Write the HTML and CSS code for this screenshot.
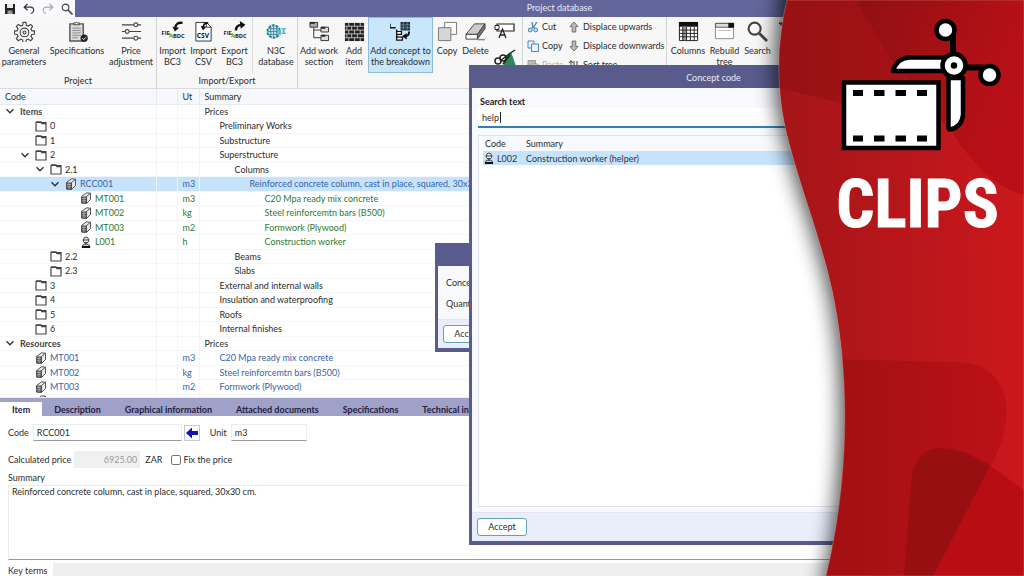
FILE: index.html
```html
<!DOCTYPE html>
<html lang="en">
<head>
<meta charset="utf-8">
<title>Project database</title>
<link rel="stylesheet" href="styles.css">
</head>
<body>
<svg class="defs" aria-hidden="true">
  <symbol id="folder" viewBox="0 0 12 12"><path d="M1 2.500h10v8.500H1z" fill="#fff" stroke="#444" stroke-width="1.200"/><path d="M1 2h5l1 1.500h4" fill="none" stroke="#444" stroke-width="1.400"/></symbol>
  <symbol id="block" viewBox="0 0 12 12"><path d="M1.500 4.500 6.500.8l4 .4v6.300L6.500 11.500l-5-.5z" fill="#e8e8e8" stroke="#444" stroke-width=".9"/><path d="M1.500 4.500h5v7h-5z" fill="#555"/><path d="m6.500 4.500 4-3.300M6.500 4.500v7" stroke="#444" stroke-width=".9"/><path d="M2 6.500h4M2 8.800h4M4 5v6" stroke="#ccc" stroke-width=".6"/></symbol>
  <symbol id="worker" viewBox="0 0 12 12"><path d="M3.500 4a2.500 3 0 0 1 5 0v1.500q-2.500 4-5 0z" fill="#eee" stroke="#444"/><path d="M2.500 4h7M4 6.500h4" stroke="#444"/><path d="M2 11.500q0-3 2.500-3.200h3Q10 8.500 10 11.500z" fill="#ccc" stroke="#444"/><path d="M2 10h8v2H2z" fill="#111"/></symbol>
  <symbol id="chev" viewBox="0 0 10 10"><path d="m1.500 3.300 3.500 3.500 3.500-3.500" fill="none" stroke="#333" stroke-width="1.400"/></symbol>
  <symbol id="pages" viewBox="0 0 22 22"><path d="M8 1.500h12.500v12.500H8z" fill="#fafafa" stroke="#777"/><path d="M1.500 7h13v13.500h-13z" fill="#d6d6d6" stroke="#777"/></symbol>
  <symbol id="arrow" viewBox="0 0 12 12"><path d="M6 1 10 5.500H7.800V11H4.200V5.500H2z" fill="#bbb" stroke="#666" stroke-width=".9"/></symbol>
</svg>

<header class="titlebar">
  <nav class="quick" aria-label="Quick access">
    <button aria-label="Save"><svg viewBox="0 0 12 12"><path d="M1 1h10v10H1z" fill="#222"/><path d="M3 1h6v4H3z" fill="#e8e8e8"/><path d="M3.500 7.500h5V11h-5z" fill="#999"/></svg></button>
    <button aria-label="Undo"><svg viewBox="0 0 12 12"><path d="M4.500 1 1.200 4.200l3.300 3M1.500 4.200h6q3.500.3 3.200 3.300-.4 2.500-3 3" fill="none" stroke="#333" stroke-width="1.200"/></svg></button>
    <button aria-label="Redo"><svg viewBox="0 0 12 12"><path d="m7.500 1 3.300 3.200-3.300 3M10.500 4.200h-6Q1 4.500 1.300 7.500q.4 2.500 3 3" fill="none" stroke="#aaa" stroke-width="1.200"/></svg></button>
    <button aria-label="Find"><svg viewBox="0 0 12 12"><circle cx="4.500" cy="4.500" r="3.300" fill="none" stroke="#444" stroke-width="1.200"/><path d="m7 7 4.500 4.500" stroke="#444" stroke-width="1.600"/></svg></button>
  </nav>
  <h1>Project database</h1>
</header>

<div class="ribbon">
  <section class="group">
    <div class="tools">
      <button class="tool w48"><svg viewBox="0 0 22 22"><g fill="none" stroke="#444" stroke-width="1.200"><path d="M9.500 1.500h3l.5 3 1.800.8 2.600-1.700 2.100 2.100-1.700 2.500.8 1.900 2.900.5v3l-2.900.5-.8 1.800 1.700 2.600-2.100 2.100-2.600-1.700-1.800.8-.5 2.900h-3l-.5-2.900-1.900-.8-2.500 1.700-2.100-2.100 1.700-2.600-.8-1.800-3-.5v-3l3-.5.8-1.900-1.700-2.500 2.100-2.100 2.500 1.700L9 4.500z"/><circle cx="11" cy="12" r="4.500"/><circle cx="11" cy="12" r="1.500"/></g></svg>General parameters</button>
      <button class="tool w58"><svg viewBox="0 0 22 22"><path d="M3 3h14v18H3z" fill="#ddd" stroke="#555" stroke-width="1.500"/><path d="M7 4V2h2q1-2 2 0h2v2z" fill="#eee" stroke="#444"/><path d="M5.500 7.500h9M5.500 10h9M5.500 12.500h9M5.500 15h9M5.500 17.500h6" stroke="#888"/><circle cx="18" cy="18" r="3.800" fill="#222"/><path d="m16 18 1.500 1.500L20 17" fill="none" stroke="#fff"/></svg>Specifications</button>
      <button class="tool w50"><svg viewBox="0 0 22 22"><g fill="#fff" stroke="#444" stroke-width="1.200"><path d="M1 4h20M1 11h20M1 18h20"/><circle cx="15.500" cy="4" r="2"/><circle cx="6.500" cy="11" r="2"/><circle cx="15.500" cy="18" r="2"/></g></svg>Price adjustment</button>
    </div>
    <h2>Project</h2>
  </section>
  <section class="group">
    <div class="tools">
      <button class="tool w31"><svg class="wide" viewBox="0 0 24 22"><path d="M22 2q-7-1-7.500 5" fill="none" stroke="#111" stroke-width="2.500"/><path d="m11.500 6 7 1-4.500 4z" fill="#111"/><text class="tiny" x="0" y="15">FIE</text><text class="tiny" x="12" y="18">BDC</text><path d="m8 13 4 4" stroke="#65b82f" stroke-width="2"/><path d="m8 17 3-3" stroke="#e8a13a" stroke-width="1.500"/></svg>Import BC3</button>
      <button class="tool w31"><svg viewBox="0 0 22 22"><path d="M3 1.500h11l5 5V21H3z" fill="#fff" stroke="#333"/><path d="M14 1.500v5h5" fill="none" stroke="#333"/><path d="M16 2q-5 0-5 4" fill="none" stroke="#111" stroke-width="2"/><path d="m8 5 6 1-3.500 4z" fill="#111"/><text class="csv" x="4" y="18">CSV</text></svg>Import CSV</button>
      <button class="tool w31"><svg class="wide" viewBox="0 0 24 22"><path d="M13 10q0-6 6-6" fill="none" stroke="#111" stroke-width="2.500"/><path d="m17 0 6 4-5 4z" fill="#111"/><text class="tiny" x="0" y="15">FIE</text><text class="tiny" x="12" y="18">BDC</text><path d="m8 13 4 4" stroke="#65b82f" stroke-width="2"/><path d="m8 17 3-3" stroke="#e8a13a" stroke-width="1.500"/></svg>Export BC3</button>
      <span class="rule"></span>
      <button class="tool w42"><svg viewBox="0 0 22 22"><circle cx="8" cy="11" r="6.500" fill="#cfe9ee" stroke="#238296" stroke-width="2" stroke-dasharray="3 1"/><path d="M3 8h10M2 11h11M3 14h10M8 5v12M5 6v10M11 6v10" stroke="#2d8798" stroke-width=".9"/><path d="M12 13V8l3 5V8M16 8h2v5h-2M21 8h-2v5h2" fill="none" stroke="#62bcd0" stroke-width="1.300"/></svg>N3C database</button>
    </div>
    <h2>Import/Export</h2>
  </section>
  <section class="group">
    <div class="tools">
      <button class="tool w42"><svg viewBox="0 0 22 22"><path d="M5 6v11.500h8M5 9.500h8" fill="none" stroke="#333"/><g fill="#aaa" stroke="#333"><path d="M1 1.500h8v5H1z"/><path d="M12.500 6.500h8v5h-8zM12.500 15h8v5.500h-8z" fill="#ddd"/></g><path d="M1 2h5M13 7h4M13 15.500h4" stroke="#222" stroke-width="2"/></svg>Add work section</button>
      <button class="tool w28"><svg viewBox="0 0 22 22"><path d="M1 2h20v19H1z" fill="#222"/><path d="M1 5.500h20M1 9.500h20M1 13.500h20M1 17.500h20M5 2v3.500M11 2v3.500M17 2v3.500M8 5.500v4M14 5.500v4M3 5.500v4M5 9.500v4M11 9.500v4M17 9.500v4M8 13.500v4M14 13.500v4M3 13.500v4M5 17.500V21M11 17.500V21M17 17.500V21" stroke="#ddd" stroke-width=".8"/></svg>Add item</button>
      <button class="tool w65 active"><svg viewBox="0 0 22 22"><path d="M11 1h10v9H11z" fill="#26343d"/><path d="M11 4h10M11 7h10M14 1v9M18 1v9" stroke="#7e99a8" stroke-width=".7"/><path d="M0 3v4h6M7 9v10M7 13h5M7 19h5" fill="none" stroke="#111" stroke-width="1.500"/><path d="M7 11h5v3H7zM7 17h6v3H7z" fill="#fff" stroke="#111" stroke-width="1.300"/><path d="M20 11q0 5-4 5" fill="none" stroke="#111" stroke-width="2"/><path d="m12.500 16 5-3.500v7z" fill="#111"/></svg>Add concept to the breakdown</button>
      <button class="tool w28"><svg viewBox="0 0 22 22"><use href="#pages"/></svg>Copy</button>
      <button class="tool w29"><svg viewBox="0 0 22 22"><path d="M1 14 10 3h11l-8 11z" fill="#ccc" stroke="#444"/><path d="M1 14h12v5H1z" fill="#fff" stroke="#444"/><path d="m13 14 8-11v5l-8 11z" fill="#777" stroke="#444"/><path d="M13 19.500h8" stroke="#888" stroke-width="1.500"/></svg>Delete</button>
      <div class="stack">
        <button aria-label="Rename"><svg viewBox="0 0 22 20"><path d="M3 2h17v7H3z" fill="#fff" stroke="#222" stroke-width="1.200"/><path d="M1 3.500h4v4H1z" fill="#fff" stroke="#222"/><path d="m5 16 3.500-9 3.500 9M6.500 13h4" fill="none" stroke="#222" stroke-width="1.300"/></svg></button>
        <button aria-label="Paint"><svg viewBox="0 0 22 20"><path d="M11 10 17 4l5 14H9z" fill="#2a8a5c"/><circle cx="4" cy="13" r="3" fill="#fff" stroke="#222" stroke-width="1.500"/><circle cx="9" cy="10" r="3" fill="#fff" stroke="#222" stroke-width="1.500"/><path d="m6 13 9-7 6-4M9 16l7-9" fill="none" stroke="#222" stroke-width="1.500"/></svg></button>
      </div>
    </div>
  </section>
  <section class="group">
    <div class="tools">
      <div class="lines cutcol">
        <button><svg viewBox="0 0 12 12"><path d="M5 1q0 4 2.500 6.500M9.500 1Q9 4 4.500 7.500" fill="none" stroke="#3a7fb8" stroke-width="1.300"/><circle cx="3.200" cy="9" r="1.900" fill="#cfe6f7" stroke="#3a7fb8"/><circle cx="8.700" cy="9" r="1.900" fill="#cfe6f7" stroke="#3a7fb8"/></svg>Cut</button>
        <button><svg viewBox="0 0 12 12"><path d="M1 1h6v7H1z" fill="#e8f3fc" stroke="#4a86bb"/><path d="M4.500 4h7v7.500h-7z" fill="#e8f3fc" stroke="#4a86bb"/></svg>Copy</button>
        <button disabled><svg viewBox="0 0 12 12"><path d="M1 1.500h7.500V9H1z" fill="#bbb" stroke="#999"/><path d="M5 5h6v6H5z" fill="#eee" stroke="#999"/></svg>Paste</button>
      </div>
      <div class="lines movecol">
        <button><svg viewBox="0 0 12 12"><use href="#arrow"/></svg>Displace upwards</button>
        <button><svg viewBox="0 0 12 12"><use href="#arrow" transform="rotate(180 6 6)"/></svg>Displace downwards</button>
        <button><svg viewBox="0 0 12 12"><path d="M3 11V2M1 4l2-2.500L5 4M9 2v9M7 8.500 9 11l2-2.500M6 2v7" fill="none" stroke="#444"/></svg>Sort tree</button>
      </div>
    </div>
  </section>
  <section class="group">
    <div class="tools">
      <button class="tool w42"><svg viewBox="0 0 22 22"><path d="M1.500 2h19v18.500h-19z" fill="#fff" stroke="#222"/><path d="M1 1h20v5H1z" fill="#111"/><path d="M5 6h4v14H5z" fill="#999"/><path d="M1 9.500h20M1 13h20M1 16.500h20M5 6v15M9 6v15M13 6v15M17 6v15" stroke="#222"/></svg>Columns</button>
      <button class="tool w31"><svg viewBox="0 0 22 22"><path d="M1.500 2.500h19v16h-19z" fill="#fff" stroke="#888"/><path d="M1.500 2.500h19v4h-19z" fill="#ddd" stroke="#555"/><path d="M15 2h6v5h-6z" fill="#111"/><path d="M4 10h14" stroke="#bbb"/></svg>Rebuild tree</button>
      <button class="tool w35"><svg viewBox="0 0 22 22"><circle cx="8" cy="8" r="6.300" fill="#f8f8f8" stroke="#444" stroke-width="2.200"/><path d="m13 13 8 8" stroke="#444" stroke-width="3"/></svg>Search</button>
      <button class="tool w28"><svg viewBox="0 0 22 22"><path d="M0 2h20l-7 8v9l-4-3v-6z" fill="#666" stroke="#333"/></svg>Filter</button>
    </div>
  </section>
</div>

<main class="tree">
  <table>
    <colgroup><col class="c-code"><col class="c-gap"><col class="c-ut"><col></colgroup>
    <thead><tr><th>Code</th><th></th><th>Ut</th><th>Summary</th></tr></thead>
    <tbody>
      <tr class="l0"><td><div><svg><use href="#chev"/></svg><b>Items</b></div></td><td></td><td></td><td>Prices</td></tr>
      <tr class="l1"><td><div><i></i><svg><use href="#folder"/></svg>0</div></td><td></td><td></td><td>Preliminary Works</td></tr>
      <tr class="l1"><td><div><i></i><svg><use href="#folder"/></svg>1</div></td><td></td><td></td><td>Substructure</td></tr>
      <tr class="l1"><td><div><svg><use href="#chev"/></svg><svg><use href="#folder"/></svg>2</div></td><td></td><td></td><td>Superstructure</td></tr>
      <tr class="l2"><td><div><svg><use href="#chev"/></svg><svg><use href="#folder"/></svg>2.1</div></td><td></td><td></td><td>Columns</td></tr>
      <tr class="l3 blue selected"><td><div><svg><use href="#chev"/></svg><svg><use href="#block"/></svg>RCC001</div></td><td></td><td>m3</td><td>Reinforced concrete column, cast in place, squared, 30x30 cm.</td></tr>
      <tr class="l4 green"><td><div><i></i><svg><use href="#block"/></svg>MT001</div></td><td></td><td>m3</td><td>C20 Mpa ready mix concrete</td></tr>
      <tr class="l4 green"><td><div><i></i><svg><use href="#block"/></svg>MT002</div></td><td></td><td>kg</td><td>Steel reinforcemtn bars (B500)</td></tr>
      <tr class="l4 green"><td><div><i></i><svg><use href="#block"/></svg>MT003</div></td><td></td><td>m2</td><td>Formwork (Plywood)</td></tr>
      <tr class="l4 green"><td><div><i></i><svg><use href="#worker"/></svg>L001</div></td><td></td><td>h</td><td>Construction worker</td></tr>
      <tr class="l2"><td><div><i></i><svg><use href="#folder"/></svg>2.2</div></td><td></td><td></td><td>Beams</td></tr>
      <tr class="l2"><td><div><i></i><svg><use href="#folder"/></svg>2.3</div></td><td></td><td></td><td>Slabs</td></tr>
      <tr class="l1"><td><div><i></i><svg><use href="#folder"/></svg>3</div></td><td></td><td></td><td>External and internal walls</td></tr>
      <tr class="l1"><td><div><i></i><svg><use href="#folder"/></svg>4</div></td><td></td><td></td><td>Insulation and waterproofing</td></tr>
      <tr class="l1"><td><div><i></i><svg><use href="#folder"/></svg>5</div></td><td></td><td></td><td>Roofs</td></tr>
      <tr class="l1"><td><div><i></i><svg><use href="#folder"/></svg>6</div></td><td></td><td></td><td>Internal finishes</td></tr>
      <tr class="l0"><td><div><svg><use href="#chev"/></svg><b>Resources</b></div></td><td></td><td></td><td>Prices</td></tr>
      <tr class="l1 blue"><td><div><i></i><svg><use href="#block"/></svg>MT001</div></td><td></td><td>m3</td><td>C20 Mpa ready mix concrete</td></tr>
      <tr class="l1 blue"><td><div><i></i><svg><use href="#block"/></svg>MT002</div></td><td></td><td>kg</td><td>Steel reinforcemtn bars (B500)</td></tr>
      <tr class="l1 blue"><td><div><i></i><svg><use href="#block"/></svg>MT003</div></td><td></td><td>m2</td><td>Formwork (Plywood)</td></tr>
      <tr class="l1 blue"><td><div><i></i><svg><use href="#block"/></svg></div></td><td></td><td></td><td></td></tr>
    </tbody>
  </table>
</main>

<section class="detail">
  <nav class="tabs">
    <a href="#item" class="current">Item</a><a href="#description">Description</a><a href="#graphical">Graphical information</a><a href="#attached">Attached documents</a><a href="#specs">Specifications</a><a href="#technical">Technical information</a>
  </nav>
  <form class="fields">
    <div class="line">
      <label for="code">Code</label><input id="code" class="f-code" value="RCC001">
      <button type="button" class="back" aria-label="Change code"><svg viewBox="0 0 12 12"><path d="M0 6 6 .5V4h6v4H6v3.500z" fill="#1414a8"/></svg></button>
      <label for="unit" class="unit">Unit</label><input id="unit" class="f-unit" value="m3">
    </div>
    <div class="line price">
      <label for="price">Calculated price</label><input id="price" class="f-price" value="6925.00" disabled>
      <span>ZAR</span>
      <input type="checkbox" id="fix"><label for="fix">Fix the price</label>
    </div>
    <label for="summary" class="sumlabel">Summary</label>
    <textarea id="summary">Reinforced concrete column, cast in place, squared, 30x30 cm.</textarea>
    <div class="line keys"><label for="keys">Key terms</label><input id="keys" disabled></div>
  </form>
</section>

<div class="window quantity" role="dialog" aria-label="Quantity">
  <div class="caption"></div>
  <div class="content"><p>Concept</p><p>Quantity</p></div>
  <footer><button class="accept">Accept</button></footer>
</div>

<div class="window concept" role="dialog" aria-labelledby="concept-title">
  <div class="caption" id="concept-title">Concept code</div>
  <div class="content">
    <label for="search">Search text</label>
    <div class="search"><input id="search" value="help"><span class="caret"></span></div>
    <div class="results">
      <table>
        <colgroup><col class="r-code"><col></colgroup>
        <thead><tr><th>Code</th><th>Summary</th></tr></thead>
        <tbody><tr><td><div><svg><use href="#worker"/></svg>L002</div></td><td>Construction worker (helper)</td></tr></tbody>
      </table>
    </div>
  </div>
  <footer><button class="accept">Accept</button></footer>
</div>

<aside class="banner">
  <svg class="backdrop" viewBox="740 0 284 576" preserveAspectRatio="none" aria-hidden="true">
    <defs>
      <linearGradient id="red" gradientUnits="userSpaceOnUse" x1="780" y1="0" x2="1024" y2="0"><stop offset="0" stop-color="#a41518"/><stop offset="1" stop-color="#cb181d"/></linearGradient>
      <linearGradient id="deep" gradientUnits="userSpaceOnUse" x1="855" y1="0" x2="1024" y2="60"><stop offset="0" stop-color="#8f1013"/><stop offset="1" stop-color="#b91017"/></linearGradient>
      <linearGradient id="low" gradientUnits="userSpaceOnUse" x1="840" y1="0" x2="1024" y2="0"><stop offset="0" stop-color="#a31013"/><stop offset="1" stop-color="#be1117"/></linearGradient>
      <path id="edge" d="M787 0C777 40 776 85 785 127C797 180 820 235 832 290C850 375 850 475 826 576H1024V0Z"/>
      <clipPath id="inside"><use href="#edge"/></clipPath>
      <filter id="shadow" filterUnits="userSpaceOnUse" x="740" y="-40" width="284" height="660"><feGaussianBlur stdDeviation="10"/></filter>
    </defs>
    <path d="M783-30C773 40 772 85 781 127C793 180 816 235 828 290C846 375 846 475 818 610H1060V-30Z" fill="#000" opacity=".7" filter="url(#shadow)"/>
    <g clip-path="url(#inside)">
      <use href="#edge" fill="url(#red)"/>
      <path d="M770 0H862L930 124 770 86Z" fill="#7c0a0d" opacity=".32"/>
      <path d="M857 0Q885 55 917 92L952 132Q985 185 1024 195V0Z" fill="url(#deep)"/>
      <path d="M770 358 955 362C1005 362 1020 405 994 460L933 576H770Z" fill="url(#low)"/>
      <path d="M904 576 912 475C917 440 955 442 988 464L1024 490V576Z" fill="#b80d12"/>
      <path d="M904 576 912 475C917 442 950 440 990 466L933 576Z" fill="#980f12"/>
    </g>
    <use href="#edge" fill="none" stroke="#e8a7a0" stroke-opacity=".35"/>
  </svg>
  <div class="brand">
    <svg class="logo" viewBox="831 16 173 138" aria-hidden="true">
      <path d="M844 82.500h94.500v65.500H844z" fill="#fff" stroke="#000" stroke-width="4.500"/>
      <path d="M853 90h10v6h-10zM874 90h10.500v6H874zM895.500 90H906v6h-10.500zM917 90h10v6h-10zM853 135.500h10v6h-10zM874 135.500h10.500v6H874zM895.500 135.500H906v6h-10.500zM917 135.500h10v6h-10z"/>
      <path d="M893 71q4-13 16-13.500h37V71zM948.500 78h14.500v37q-1 12-13 14.500-1.500 0-1.500-2z" fill="#fff" stroke="#000" stroke-width="4.500" stroke-linejoin="round"/>
      <path d="M953 60V33M960 67.500h24" stroke="#000" stroke-width="6"/>
      <g fill="#fff" stroke="#000" stroke-width="4.500"><circle cx="945.500" cy="30" r="9"/><circle cx="989.500" cy="75" r="9"/><circle cx="954" cy="65.500" r="11.500"/></g>
      <circle cx="954" cy="65.500" r="3.200"/>
    </svg>
    <strong>CLIPS</strong>
  </div>
</aside>
</body>
</html>
```
FILE: styles.css
```css
* { box-sizing: border-box; }

body {
  margin: 0;
  height: 100vh;
  display: flex;
  flex-direction: column;
  position: relative;
  overflow: hidden;
  background: #fff;
  color: #2c2c2c;
  font: 9px/12px Lato, "Open Sans", sans-serif;
}

button, input, textarea { font: inherit; color: inherit; }
button { border: 0; background: none; padding: 0; }
h1, h2, p { margin: 0; font: inherit; }
svg { display: block; }
.defs { position: absolute; width: 0; height: 0; }

/* title bar */
.titlebar { display: flex; height: 17px; flex: none; background: #63669b; color: #e8e8f4; }
.quick { display: flex; gap: 7px; width: 75px; padding: 1px 4px; background: #fafafc; }
.quick svg { width: 12px; height: 12px; }
.quick button { width: 12px; }
.titlebar h1 { flex: 1; padding: 2px 75px 0 95px; text-align: center; }

/* ribbon */
.ribbon { display: flex; flex: none; height: 72px; background: #f7f7f8; border-bottom: 1px solid #d9dbe0; overflow: hidden; }
.group { display: flex; flex-direction: column; flex: none; border-right: 1px solid #d3d4d8; }
.group h2 { text-align: center; line-height: 16px; }
.tools { display: flex; height: 56px; }
.tool {
  display: flex;
  flex-direction: column;
  align-items: center;
  height: 56px;
  padding-top: 3px;
  line-height: 11px;
  border: 1px solid transparent;
}
.tool svg { width: 21px; height: 21px; flex: none; margin-bottom: 3px; }
.tool svg.wide { width: 24px; }
.tool.active { background: #c9e7fb; border-color: #8dbbd9; }
.w28 { width: 28px; } .w29 { width: 29px; } .w31 { width: 31px; } .w35 { width: 35px; }
.w42 { width: 42px; } .w48 { width: 48px; } .w50 { width: 50px; }
.w58 { width: 58px; } .w65 { width: 65px; }
.rule { width: 1px; margin: 0 2px; background: #dadbdf; }
.tiny { font: bold 6px "Open Sans", sans-serif; fill: #222; }
.csv { font: bold 7px "Open Sans", sans-serif; fill: #111; }
.stack { display: flex; flex-direction: column; gap: 4px; width: 32px; padding: 4px 0 0 4px; }
.stack svg { width: 22px; height: 22px; }
.lines { display: flex; flex-direction: column; gap: 7px; padding-top: 4px; }
.lines button { display: flex; gap: 3px; align-items: center; white-space: nowrap; }
.lines button:disabled { color: #b5b5b5; }
.lines svg { width: 12px; height: 12px; }
.cutcol { width: 45px; padding-left: 4px; }
.movecol { width: 98px; }

/* project tree */
.tree { flex: 1; min-height: 0; overflow: hidden; border-bottom: 1px solid #eceef6; }
table { width: 100%; border-collapse: collapse; table-layout: fixed; }
th, td { padding: 0; text-align: left; white-space: nowrap; overflow: hidden; font-weight: inherit; line-height: 13px; }
.tree th { height: 15px; background: #f6f8fc; border-right: 1px solid #e6e9f0; border-bottom: 1px solid #e6e9f0; padding-left: 5px; }
.tree td { height: 14px; border-right: 1px solid #f2f4f8; border-bottom: 1px solid #f4f6f9; }
.tree tbody tr:nth-child(even) td { height: 15px; }
.tree td:nth-child(3) { padding-left: 5px; }
.tree td div { display: flex; align-items: center; height: 13px; }
.tree td b { font-weight: 700; margin-left: 5px; color: #444; }
.tree svg, .tree i { width: 12px; height: 12px; margin-right: 3px; flex: none; }
.tree td svg:first-child { width: 10px; height: 10px; margin: 0 5px 0 0; }
.tree td i { width: 15px; margin: 0; }
.tree .l0 svg:first-child { margin: 0; }
.c-code { width: 156px; } .c-gap { width: 21px; } .c-ut { width: 22px; }
.l0 td:first-child { padding-left: 5px; } .l0 td:last-child { padding-left: 5px; }
.l1 td:first-child { padding-left: 20px; } .l1 td:last-child { padding-left: 20px; }
.l2 td:first-child { padding-left: 35px; } .l2 td:last-child { padding-left: 35px; }
.l3 td:first-child { padding-left: 50px; } .l3 td:last-child { padding-left: 50px; }
.l4 td:first-child { padding-left: 65px; } .l4 td:last-child { padding-left: 65px; }
.blue { color: #3564a8; }
.green { color: #2b7a34; }
.selected { background: #c6e3fb; }

/* detail pane */
.detail { flex: none; height: 178px; }
.tabs { display: flex; height: 18px; padding-top: 4px; background: #9fa1c8; }
.tabs a { padding: 2px 12px 0; line-height: 11px; font-weight: 700; color: #1f2140; text-decoration: none; white-space: nowrap; }
.tabs .current { background: #fff; }
.fields { padding: 8px 0 0 8px; }
.line { display: flex; align-items: center; height: 17px; }
.line input, textarea { border: 1px solid #ebebeb; border-bottom-color: #999; background: #fff; padding: 0 3px; height: 17px; border-radius: 0; }
.line .f-code { width: 149px; margin: 0 2px 0 4px; }
.line .f-unit { width: 76px; margin-left: 4px; }
.unit { margin-left: 10px; }
.back { width: 16px; height: 16px; border: 1px solid #c5c9dd; padding: 1px; }
.price { margin-top: 10px; }
.line .f-price { width: 66px; margin: 0 5px 0 3px; border: 0; background: #f0f0f0; color: #999; text-align: right; }
.line input[type="checkbox"] { width: 10px; height: 10px; margin: 0 2px 0 9px; appearance: none; border: 1px solid #777; border-radius: 2px; padding: 0; }
.sumlabel { display: block; margin-top: 4px; }
textarea { display: block; width: 100%; height: 75px; margin: 1px 0 4px; resize: none; overflow: hidden; line-height: 12px; }
.line.keys { height: 14px; }
.keys input { flex: 1; margin-left: 5px; background: #efefef; border: 0; }

/* dialog windows lie over the main window */
.window { position: absolute; display: flex; flex-direction: column; background: #f8f9fd; border: 4px solid #585b8b; border-top: 0; border-left-width: 3px; }
.caption { flex: none; height: 23px; padding-top: 7px; background: #585b8b; color: #ececf6; text-align: center; }
.window footer { flex: none; background: #e9eefa; border-top: 1px solid #e2e5ef; padding: 5px; }
.accept { display: block; width: 50px; height: 18px; background: #fff; border: 1px solid #5fa3ac; border-radius: 3px; }
.quantity { left: 435px; top: 243px; width: 200px; }
.quantity .content { padding: 11px 8px 9px; }
.quantity p + p { margin-top: 9px; }
.concept { left: 469px; top: 65px; width: 490px; height: 480px; }
.concept .content { flex: 1; display: flex; flex-direction: column; padding: 8px 6px 5px; }
.concept label { color: #222; font-weight: 700; padding-left: 2px; }
.search { display: flex; align-items: center; height: 20px; border-bottom: 2px solid #3280b2; background: #fff; margin-bottom: 7px; position: relative; }
.search input { flex: 1; border: 0; padding: 1px 4px 0; outline: 0; background: none; }
.caret { position: absolute; left: 22px; width: 1px; height: 11px; background: #222; }
.results { flex: 1; border: 1px solid #dfe3ee; background: #fff; padding-left: 4px; }
.results th { height: 15px; background: #f8f9fd; }
.results td { height: 14px; background: #c6e3fb; color: #333; }
.results td div { display: flex; align-items: center; gap: 2px; }
.results svg { width: 12px; height: 12px; }
.r-code { width: 43px; }
.results th:first-child { padding-left: 2px; }

/* banner that covers the right side */
.banner { position: absolute; right: 0; top: 0; width: 284px; height: 100%; }
.backdrop { position: absolute; width: 100%; height: 100%; }
.brand { position: relative; display: flex; flex-direction: column; align-items: center; padding: 16px 20px 0 91px; }
.logo { width: 173px; height: 138px; }
.brand strong { margin-top: 16px; color: #fff; font: bold 67px/68px "Liberation Sans Narrow", "Roboto Condensed", Roboto, sans-serif; -webkit-text-stroke: 1px #fff; }
```
